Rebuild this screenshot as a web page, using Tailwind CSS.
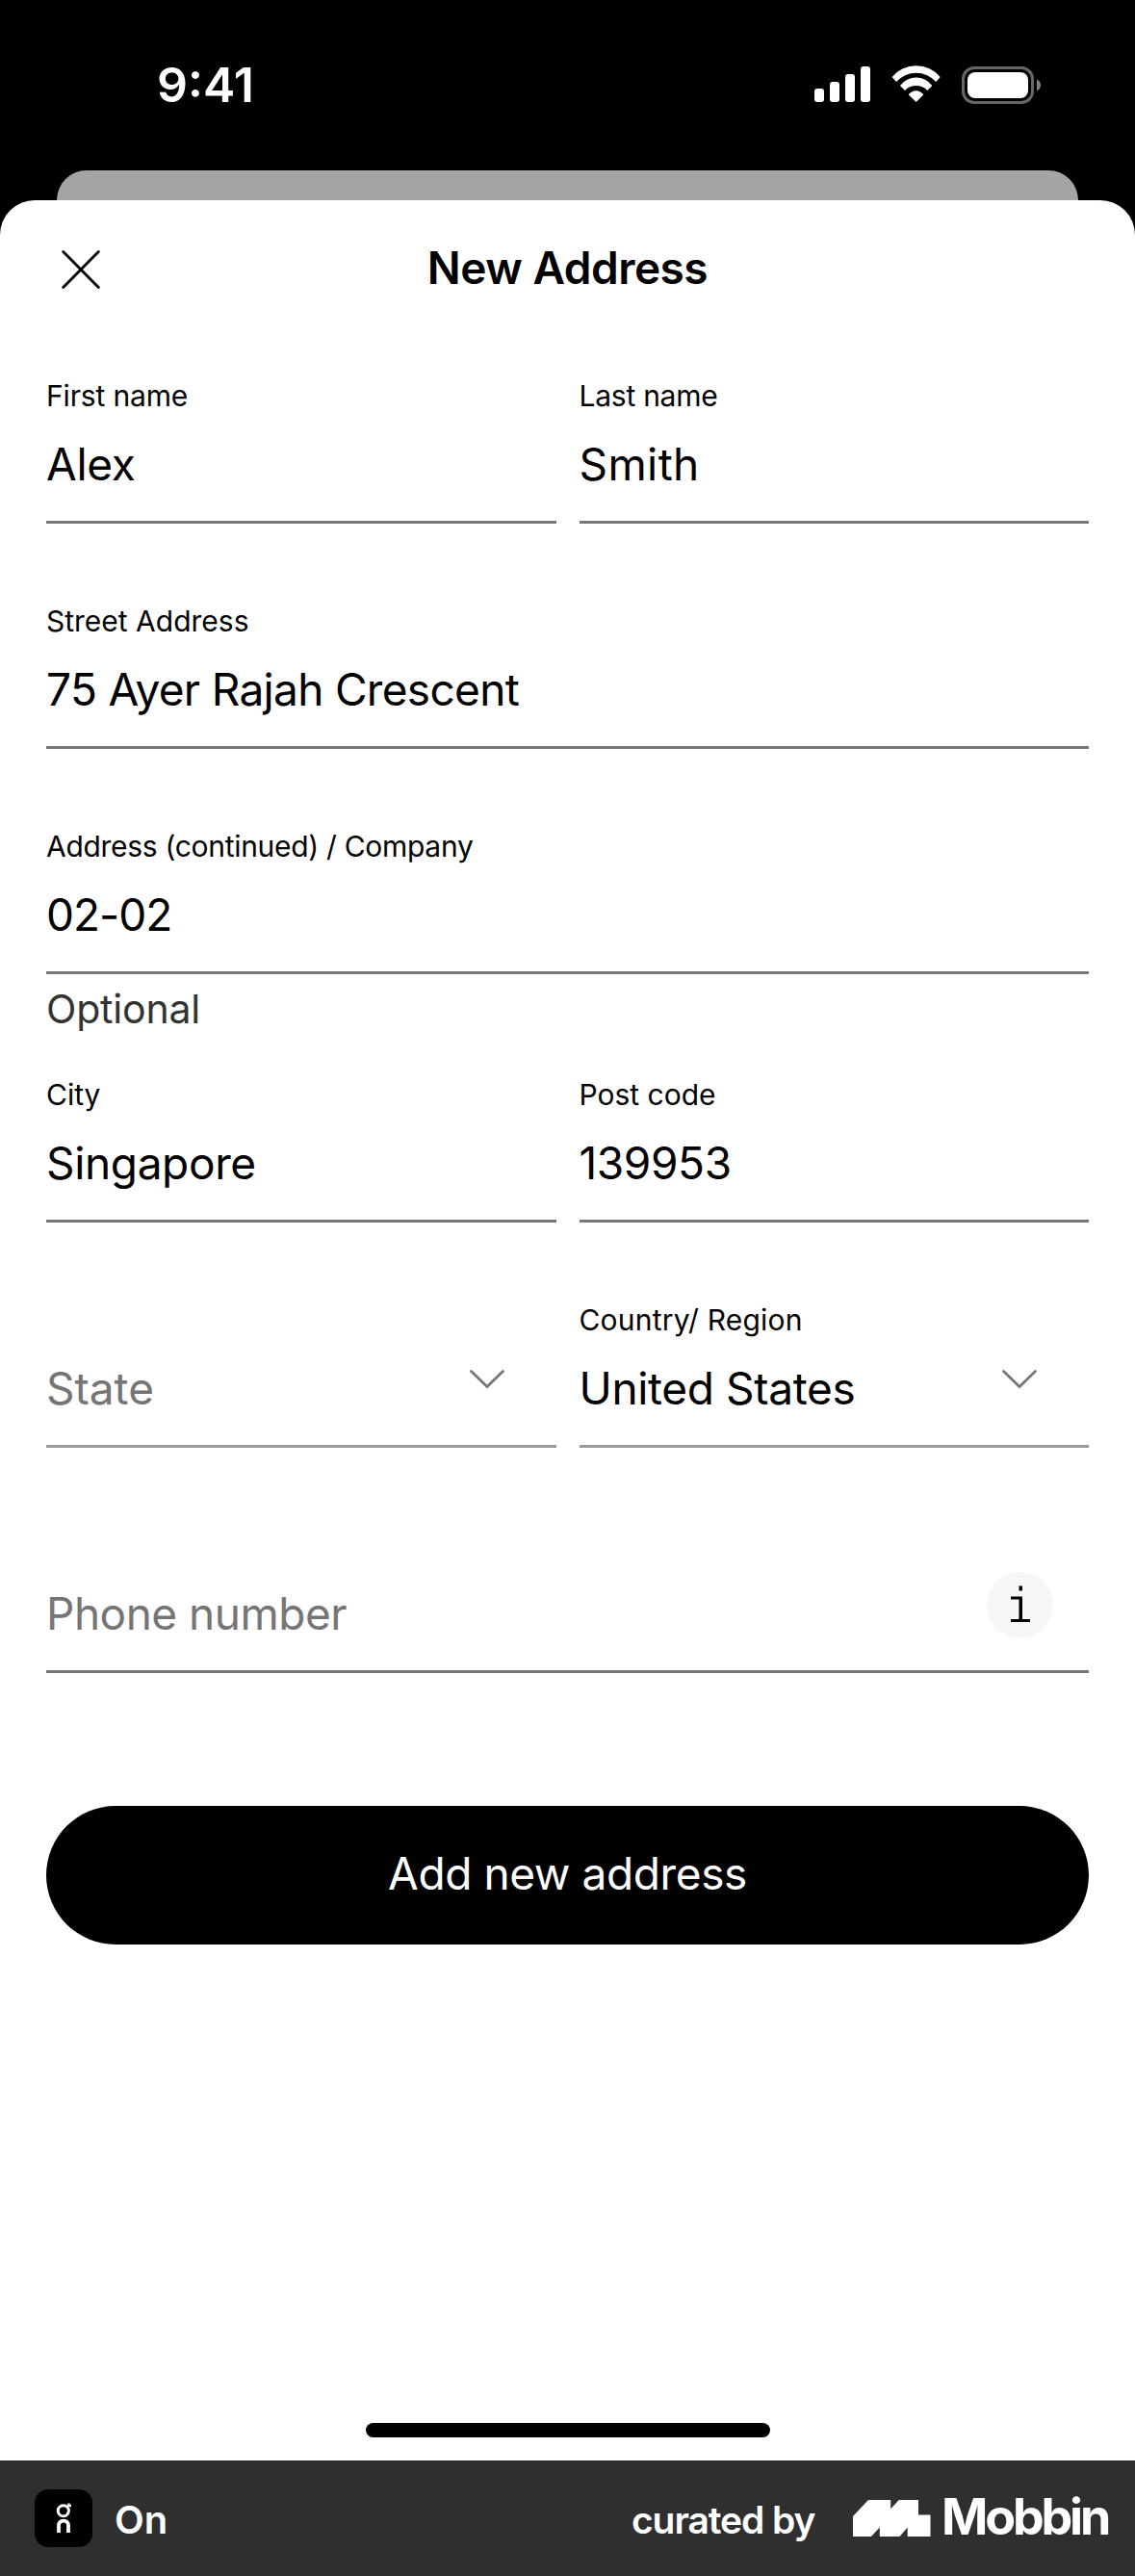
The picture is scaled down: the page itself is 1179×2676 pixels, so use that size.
<!DOCTYPE html>
<html lang="en">
<head>
<meta charset="utf-8">
<title>New Address</title>
<script src="https://cdn.jsdelivr.net/npm/@tailwindcss/browser@4"></script>
</head>
<body class="bg-black font-['Inter','Liberation_Sans',sans-serif] text-black">
<div class="flex h-[2676px] w-[1179px] flex-col overflow-hidden bg-black">

  <!-- Status bar -->
  <header class="mb-px flex h-[176px] shrink-0 items-center justify-between pr-[98px] pl-[163px] text-white">
    <span class="text-[50px] leading-[60px] font-semibold">9:41</span>
    <svg class="h-10 w-[235px]" viewBox="0 0 235 40" fill="#fff">
      <rect x="0" y="24" width="10" height="14" rx="3"/>
      <rect x="16" y="17" width="10" height="21" rx="3"/>
      <rect x="32" y="9" width="10" height="29" rx="3"/>
      <rect x="48" y="1" width="10" height="37" rx="3"/>
      <g transform="translate(-66 -38) scale(.33333)">
        <path d="M440 150A97.5 97.5 0 0 1 590 150L577 165A83 83 0 0 0 453 165Z"/>
        <path d="M465 177A62 62 0 0 1 565 177L550 192A48 48 0 0 0 480 192Z"/>
        <path d="M491 205A29 29 0 0 1 538 205L515 228Z"/>
      </g>
      <rect x="154.5" y="2.5" width="72" height="36" rx="11.5" fill="none" stroke="#666" stroke-width="3"/>
      <rect x="159" y="7" width="63" height="27" rx="8"/>
      <path d="M231 14.5C233.600 15.500 235 18 235 20.500S233.600 25.500 231 26.500Z" fill="#808080"/>
    </svg>
  </header>

  <!-- Edge of the page behind the sheet -->
  <div class="mx-[59px] h-[31px] shrink-0 rounded-t-[31px] bg-[#a5a5a5]"></div>

  <main class="flex h-[2348px] shrink-0 flex-col rounded-t-[36px] bg-white px-12 pt-10">
    <div class="grid h-16 grid-cols-[1fr_auto_1fr] items-center">
      <svg class="ml-4 size-10" viewBox="0 0 40 40" fill="none" stroke="#000" stroke-width="2.8" stroke-linecap="round"><path d="M1.700 1.500 38.300 38.500M38.300 1.500 1.700 38.500"/></svg>
      <h1 class="pb-1 text-[46px] leading-[60px] font-semibold tracking-[-0.5px]">New Address</h1>
      <span></span>
    </div>

    <div class="mt-[79px] grid grid-cols-2 gap-6">
      <div class="border-b-3 border-[#777]">
        <div class="text-[30px] leading-10 tracking-[-0.15px]">First name</div>
        <div class="h-[110px] pt-[21px] text-[46px] leading-[60px] tracking-[-0.3px]">Alex</div>
      </div>
      <div class="border-b-3 border-[#777]">
        <div class="text-[30px] leading-10 tracking-[-0.25px]">Last name</div>
        <div class="h-[110px] pt-[21px] text-[46px] leading-[60px] tracking-[0.4px]">Smith</div>
      </div>
    </div>

    <div class="mt-[81px] border-b-3 border-[#777]">
      <div class="text-[30px] leading-10">Street Address</div>
      <div class="h-[110px] pt-[21px] text-[46px] leading-[60px] tracking-[-0.68px]">75 Ayer Rajah Crescent</div>
    </div>

    <div class="mt-[81px] border-b-3 border-[#777]">
      <div class="text-[30px] leading-10 tracking-[-0.3px]">Address (continued) / Company</div>
      <div class="h-[110px] pt-[21px] text-[46px] leading-[60px] tracking-[-1px]">02-02</div>
    </div>
    <div class="mt-[11px] text-[41px] leading-[50px] tracking-[-0.2px] text-[#333]">Optional</div>

    <div class="mt-11 grid grid-cols-2 gap-6">
      <div class="border-b-3 border-[#777]">
        <div class="text-[30px] leading-10">City</div>
        <div class="h-[110px] pt-[21px] text-[46px] leading-[60px] tracking-[-0.35px]">Singapore</div>
      </div>
      <div class="border-b-3 border-[#777]">
        <div class="text-[30px] leading-10">Post code</div>
        <div class="h-[110px] pt-[21px] text-[46px] leading-[60px] tracking-[-0.4px]">139953</div>
      </div>
    </div>

    <div class="mt-[81px] grid grid-cols-2 gap-6">
      <div class="flex items-start justify-between border-b-3 border-[#999] pt-10 pr-[54px]">
        <div class="h-[110px] pt-[21px] text-[46px] leading-[60px] text-[#757575]">State</div>
        <svg class="mt-8 h-5 w-9" viewBox="0 0 36 20" fill="none" stroke="#777" stroke-width="2.800" stroke-linecap="round"><path d="M1.500 1.500 18 17.500 34.500 1.500"/></svg>
      </div>
      <div class="border-b-3 border-[#999]">
        <div class="text-[30px] leading-10 tracking-[0.2px]">Country/ Region</div>
        <div class="flex h-[110px] items-start justify-between pr-[54px]">
          <div class="pt-[21px] text-[46px] leading-[60px] tracking-[-0.35px]">United States</div>
          <svg class="mt-8 h-5 w-9" viewBox="0 0 36 20" fill="none" stroke="#777" stroke-width="2.800" stroke-linecap="round"><path d="M1.500 1.500 18 17.500 34.500 1.500"/></svg>
        </div>
      </div>
    </div>

    <div class="mt-[81px] flex items-start justify-between border-b-3 border-[#777] pt-10 pr-[37px]">
      <div class="h-[110px] pt-[21px] text-[46px] leading-[60px] tracking-[-0.5px] text-[#757575]">Phone number</div>
      <div class="mt-2 flex size-[69px] items-center justify-center rounded-full bg-[#f8f7f6] pb-[3px]">
        <svg class="h-[38px] w-[22px]" viewBox="0 0 22 38" fill="#000"><path d="M9.500 0.500h3.500v5h-3.500zM1 11.500h12v23.500h8v3H1v-3h8.500v-20.500H1z"/></svg>
      </div>
    </div>

    <button class="mt-[138px] h-36 w-full rounded-full bg-black pb-1 text-[46px] leading-[60px] tracking-[-0.4px] text-white">Add new address</button>

    <div class="mx-auto mt-[497px] h-[15px] w-[420px] rounded-full bg-black"></div>
  </main>

  <!-- Attribution bar -->
  <footer class="flex h-[120px] shrink-0 items-center bg-[#2f2f2f] pl-9 text-white">
    <svg class="size-[60px] rounded-[14px] bg-black" viewBox="0 0 60 60" fill="none" stroke="#fff">
      <circle cx="29.800" cy="22.300" r="5.600" stroke-width="2.900"/>
      <path d="M33 18.800 35.500 16.300V14.500M35 17H38" stroke-width="2.400"/>
      <path d="M25 45V37.500C25 34.500 27 32.700 30 32.700S35 34.500 35 37.500V45" stroke-width="3.800"/>
    </svg>
    <span class="ml-[23px] pt-[3px] text-[40px] leading-[60px] font-semibold">On</span>
    <span class="ml-auto w-[230px] pt-[3px] text-[39px] leading-[60px] font-semibold tracking-[-1.1px]">curated by</span>
    <svg class="h-[38px] w-[81px]" viewBox="0 0 81 38" fill="#fff"><path d="M0 17 16 0H39.200V9.300L47.800 0H68V15.500H80.500V38H56.700V28.500L48.500 38H27.800V28.500L19 38H0Z"/></svg>
    <span class="w-[212px] pb-0.5 pl-[11px] text-[52px] leading-[60px] font-bold tracking-[-3.200px]">Mobbin</span>
  </footer>
</div>
</body>
</html>
